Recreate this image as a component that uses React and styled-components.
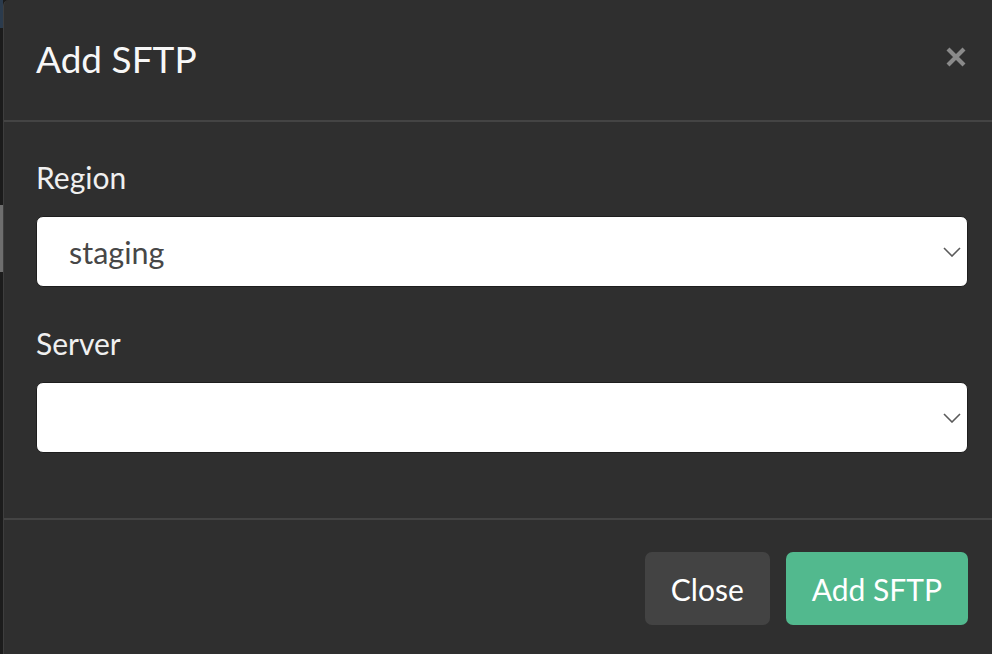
import React from "react";
import styled, { createGlobalStyle } from "styled-components";

const Global = createGlobalStyle`
  html, body { margin: 0; padding: 0; height: 100%; }
  body {
    background: #1c1c1c;
    font-family: Lato, "Noto Sans", "Liberation Sans", sans-serif;
    overflow: hidden;
  }
  #root { height: 100%; }
`;

const Page = styled.div`
  display: flex;
  width: 992px;
  height: 654px;
  overflow: hidden;
`;

const Backdrop = styled.div`
  width: 3px;
  flex: none;
  display: flex;
  flex-direction: column;
`;

const Strip = styled.div`
  height: ${(p) => p.$h}px;
  flex: ${(p) => (p.$grow ? 1 : "none")};
  background: ${(p) => p.$c};
`;

const Modal = styled.div`
  flex: 1;
  display: flex;
  flex-direction: column;
  background: #2f2f2f;
  border-left: 1px solid #3e3e3e;
  border-top-left-radius: 6px;
  min-width: 0;
`;

const Header = styled.div`
  height: 122px;
  flex: none;
  display: flex;
  align-items: center;
  justify-content: space-between;
  padding: 0 24px 2px 32px;
  box-sizing: border-box;
  border-bottom: 2px solid #444444;
`;

const Title = styled.h4`
  margin: 0;
  font-size: 37px;
  font-weight: 400;
  line-height: 1.2;
  color: #f7f7f7;
`;

const CloseX = styled.button`
  border: 0;
  background: none;
  padding: 0;
  width: 24px;
  height: 24px;
  margin-bottom: 4px;
  display: flex;
  align-items: center;
  justify-content: center;
  cursor: pointer;
`;

const Body = styled.div`
  flex: none;
  height: 398px;
  box-sizing: border-box;
  padding: 37px 24px 0 32px;
  display: flex;
  flex-direction: column;
  border-bottom: 2px solid #444444;
`;

const Field = styled.div`
  display: flex;
  flex-direction: column;
  margin-bottom: ${(p) => p.$mb}px;
`;

const Label = styled.label`
  font-size: 30px;
  line-height: 1.2;
  color: #f0f0f0;
  margin-bottom: 21px;
`;

const Select = styled.div`
  height: 71px;
  box-sizing: border-box;
  background: #ffffff;
  border: 1px solid #1e1e1e;
  border-radius: 7px;
  display: flex;
  align-items: center;
  justify-content: space-between;
  padding: 0 6px 0 32px;
  font-size: 30.5px;
  color: #474747;
`;

const Footer = styled.div`
  flex: 1;
  display: flex;
  justify-content: flex-end;
  align-items: flex-start;
  gap: 16px;
  padding: 32px 24px 0 0;
`;

const Button = styled.button`
  height: 73px;
  border: 0;
  border-radius: 7px;
  padding: 0 ${(p) => p.$px}px;
  font-family: inherit;
  font-size: 30px;
  color: #ffffff;
  background: ${(p) => p.$bg};
  cursor: pointer;
`;

const Chevron = () => (
  <svg width="18" height="10" viewBox="0 0 18 10">
    <path d="M1 1 L9 9 L17 1" fill="none" stroke="#5a5a5a" strokeWidth="1.6" />
  </svg>
);

export default function App() {
  return (
    <Page>
      <Global />
      <Backdrop>
        <Strip $h={28} $c="#2b3b4d" />
        <Strip $h={177} $c="#1b1b1b" />
        <Strip $h={67} $c="#6e6e6e" />
        <Strip $grow $c="#1c1c1c" />
      </Backdrop>
      <Modal>
        <Header>
          <Title>Add SFTP</Title>
          <CloseX aria-label="Close">
            <svg width="22" height="22" viewBox="0 0 22 22">
              <path d="M3 3 L19 19 M19 3 L3 19" stroke="#8a8a8a" strokeWidth="4.2" />
            </svg>
          </CloseX>
        </Header>
        <Body>
          <Field $mb={38}>
            <Label>Region</Label>
            <Select>
              <span>staging</span>
              <Chevron />
            </Select>
          </Field>
          <Field $mb={0}>
            <Label>Server</Label>
            <Select>
              <span></span>
              <Chevron />
            </Select>
          </Field>
        </Body>
        <Footer>
          <Button $bg="#434343" $px={26}>Close</Button>
          <Button $bg="#52b98e" $px={26}>Add SFTP</Button>
        </Footer>
      </Modal>
    </Page>
  );
}
